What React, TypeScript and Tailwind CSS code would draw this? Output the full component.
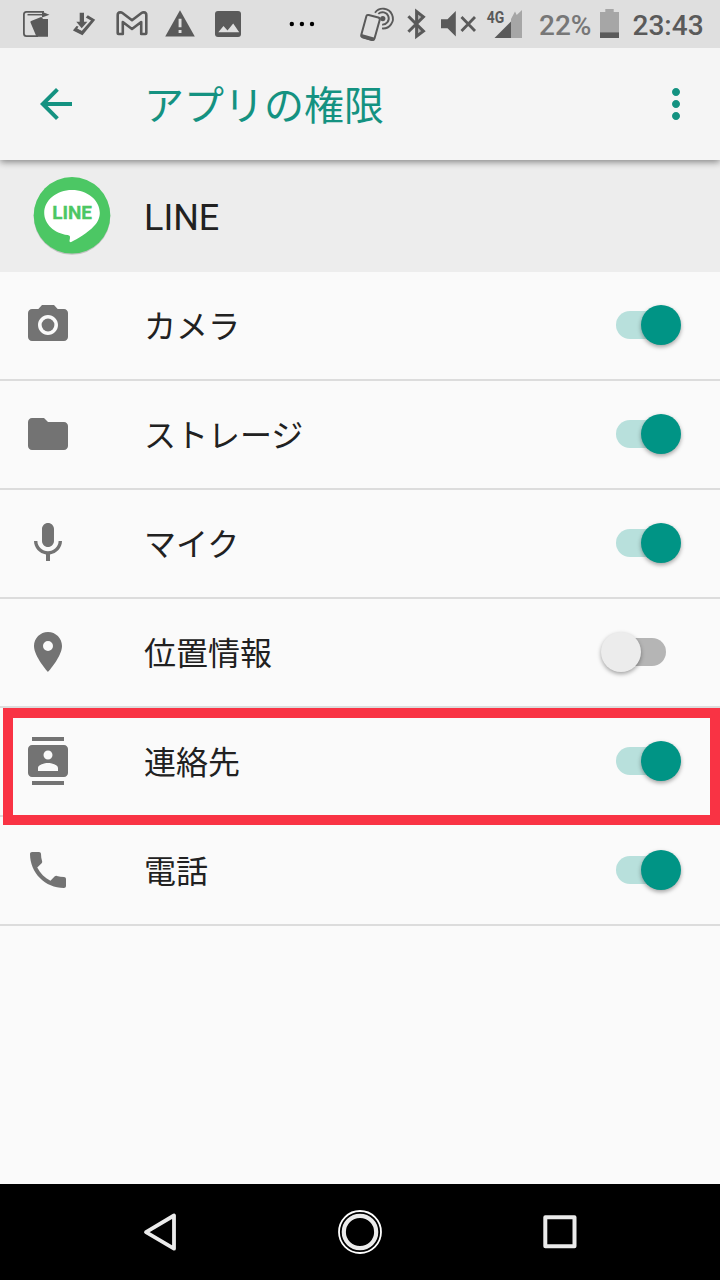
import { useState } from 'react'
import type { IconType } from 'react-icons'
import {
  MdArrowBack,
  MdContacts,
  MdFolder,
  MdMic,
  MdMoreVert,
  MdPhone,
  MdPhotoCamera,
  MdPlace,
} from 'react-icons/md'
import clsx from 'clsx'

interface Permission {
  label: string
  icon: IconType
  granted: boolean
  highlighted?: boolean
}

const permissions: Permission[] = [
  { label: 'カメラ', icon: MdPhotoCamera, granted: true },
  { label: 'ストレージ', icon: MdFolder, granted: true },
  { label: 'マイク', icon: MdMic, granted: true },
  { label: '位置情報', icon: MdPlace, granted: false },
  { label: '連絡先', icon: MdContacts, granted: true, highlighted: true },
  { label: '電話', icon: MdPhone, granted: true },
]

function StatusBar() {
  return (
    <div className="relative z-20 flex h-12 shrink-0 items-center bg-[#dfdfdf] pl-3 text-[#5a5a5a]">
      {/* notifications */}
      <svg className="h-12 w-12 shrink-0" viewBox="12 0 48 48" fill="none" stroke="currentColor" strokeWidth="1.8">
        <path d="M44 11.9H26.5q-2.6 0-2.6 2.6v19q0 2.6 2.6 2.6H38" />
        <path d="M27.5 14.7H43" strokeWidth="1.5" />
        <path d="M42 11.8l7.5 2.9-7.5 2.9zM30.5 22.5q-.4-1 .6-1.4l9.4-3.9q1-.4 1.5.3l1 1.4h5V36.8H36.5z" fill="currentColor" stroke="none" />
      </svg>
      <svg className="h-12 w-12 shrink-0" viewBox="60 0 48 48">
        <path d="M85.8 17.500l2-2.200 7.400 4.400L82.500 35.200 73 30.500l3.500-4.500 2 .5-1.400 2.500 4.600 2L91 20.500l-3.600-2z" fill="currentColor" />
        <path d="M73.500 30l2.200-2.300 7 3.800-.8 2.800z" fill="currentColor" />
        <path d="M79.700 12.800h4.300v9h3.400l-5.700 6.400-5.400-6.400h3.400z" fill="currentColor" />
      </svg>
      <svg className="h-12 w-12 shrink-0" viewBox="108 0 48 48" fill="none" stroke="currentColor" strokeWidth="2.6" strokeLinejoin="round">
        <path d="M118.500 34h4.300V22l9.200 7 9.200-7v12h4.300q.8 0 .8-.8V15q0-2.500-2.500-2.700-1.400 0-2.600.9l-9.200 7-9.200-7q-1.200-.9-2.600-.9-2.500.2-2.500 2.700v18.200q0 .8.8.8z" />
      </svg>
      <svg className="h-12 w-12 shrink-0" viewBox="156 0 48 48">
        <path d="M180 10.300L194.800 36.600H165.200z" fill="currentColor" />
        <path d="M178.600 18.800h2.900v8.500h-2.900zM178.600 30h2.900v3h-2.900z" fill="#dfdfdf" />
      </svg>
      <svg className="h-12 w-12 shrink-0" viewBox="204 0 48 48">
        <rect x="215" y="11" width="26" height="26" rx="3" fill="currentColor" />
        <path d="M218.300 32.300l5.200-6.300 4 4.600 5.700-7 6 8.700z" fill="#dfdfdf" />
      </svg>
      <svg className="ml-9 h-12 w-7 shrink-0" viewBox="288 0 28 48" fill="#000">
        <circle cx="291.8" cy="24" r="2.2" />
        <circle cx="301.9" cy="24" r="2.2" />
        <circle cx="312" cy="24" r="2.2" />
      </svg>

      {/* system indicators */}
      <svg className="ml-[42px] h-12 w-[38px] shrink-0" viewBox="358 0 38 48" fill="none" stroke="currentColor">
        <path d="M368.700 15l9.600 2.500q1.900.6 1.400 2.500l-5.200 18.500q-.6 2-2.500 1.500l-9.500-2.800q-1.700-.5-1.200-2.400l5-18.300q.5-2 2.400-1.500z" strokeWidth="2" />
        <path d="M361.500 34l13.300 3.700-.8 2.800-1.700.5-10-2.900-1.500-1.500z" fill="currentColor" stroke="none" />
        <circle cx="382.800" cy="18.600" r="2.600" fill="currentColor" stroke="none" />
        <path d="M378.300 13.900a6.200 6.200 0 1 1 3.800 10.700" strokeWidth="1.9" />
        <path d="M375 12.700a9.900 9.900 0 1 1 7 15.700" strokeWidth="1.900" />
      </svg>
      <svg className="ml-1 h-12 w-[34px] shrink-0" viewBox="400 0 34 48" fill="none" stroke="currentColor" strokeWidth="3">
        <path d="M408.400 16.200l15 15-6.800 5V11.600l6.800 5.200-15 15" />
        <path d="M416.500 11l7.500 5.500-7.500 6.500zM416.500 25l7.500 6-7.500 6z" fill="currentColor" fillOpacity=".3" stroke="none" />
      </svg>
      <svg className="ml-[7px] h-12 w-[37px] shrink-0" viewBox="441 0 37 48">
        <path d="M441 19.300h6.500l8.300-8.300v25.500l-8.300-8.300H441z" fill="currentColor" />
        <path d="M461.500 17l13.500 14m0-14l-13.500 14" stroke="currentColor" strokeWidth="2.8" />
      </svg>
      <svg className="ml-2 h-12 w-[38px] shrink-0" viewBox="486 0 38 48">
        <path d="M511 38V19l4-7.500 1.700 3.500L522 10v28z" fill="#a6a6a6" />
        <path d="M494.500 38L511 21.500V38z" fill="currentColor" />
        <text x="486.8" y="22.8" fontSize="17" textLength="17.5" lengthAdjust="spacingAndGlyphs" fill="currentColor" className="font-['Roboto',sans-serif] font-bold">
          4G
        </text>
      </svg>
      <span className="ml-[15px] w-[52.5px] shrink-0 pt-[3px] text-[28px] leading-none font-medium text-[#777]">22%</span>
      <svg className="ml-2 h-12 w-5 shrink-0" viewBox="600 0 20 48">
        <path d="M600 12h5.300V9h8.400v3h5.300v20.500h-19z" fill="#a6a6a6" />
        <path d="M600 32.300h19V38h-19z" fill="currentColor" />
      </svg>
      <span className="ml-[13px] shrink-0 pt-[3px] text-[28px] leading-none font-medium">23:43</span>
    </div>
  )
}

function LineLogo() {
  return (
    <svg className="size-20" viewBox="32 176 80 80">
      <circle cx="72" cy="216.5" r="38.3" fill="#000" opacity=".18" />
      <circle cx="72" cy="215.3" r="38.3" fill="#4cc764" />
      <path d="M72 190c-15.400 0-27.800 10.200-27.800 22.800 0 11.300 10 20.600 23.400 22.300 2.400.4 2.600 1.400 2.300 3.300l-.4 2.400c-.1 1 .6 1.600 1.700 1.200 1.400-.5 13.500-7.200 20.500-13.500 5.400-4.900 8.100-9.800 8.100-15.700C99.800 200.200 87.400 190 72 190z" fill="#fff" />
      <text x="52.3" y="218.9" fontSize="18" textLength="39.7" lengthAdjust="spacingAndGlyphs" fill="#4cc764" stroke="#4cc764" strokeWidth=".3" className="font-['Roboto',sans-serif] font-bold">
        LINE
      </text>
    </svg>
  )
}

function Toggle({ on, onChange }: { on: boolean; onChange: () => void }) {
  return (
    <button
      role="switch"
      aria-checked={on}
      onClick={onChange}
      className={clsx('mr-[54px] flex h-7 w-[50px] items-center rounded-full', on ? 'justify-end bg-[#b8e0dc]' : 'justify-start bg-[#b5b5b5]')}
    >
      <span
        className={clsx(
          'size-10 shrink-0 rounded-full shadow-[0_2px_4px_rgba(0,0,0,0.35)]',
          on ? '-mr-[15px] bg-[#009485]' : '-ml-[15px] bg-[#ececec]'
        )}
      />
    </button>
  )
}

export default function App() {
  const [items, setItems] = useState(permissions)

  const toggle = (index: number) =>
    setItems(items.map((item, i) => (i === index ? { ...item, granted: !item.granted } : item)))

  return (
    <div lang="ja" className="flex h-[1280px] w-[720px] flex-col overflow-hidden bg-[#fafafa] font-['Roboto','Noto_Sans_CJK_JP',sans-serif] text-[#212121]">
      <StatusBar />

      <header className="z-10 flex h-28 shrink-0 items-center bg-[#f5f5f5] px-5 pl-8 text-[#149281] shadow-[0_2px_7px_rgba(0,0,0,0.45)]">
        <MdArrowBack className="size-12" />
        <h1 className="ml-16 flex-1 pt-1.5 text-[40px] leading-none">アプリの権限</h1>
        <MdMoreVert className="size-12" />
      </header>

      <div className="flex h-28 shrink-0 items-center bg-[#ededed] pl-8">
        <LineLogo />
        <span className="ml-8 pt-1 text-4xl leading-none">LINE</span>
      </div>

      <ul>
        {items.map(({ label, icon: Icon, granted, highlighted }, i) => (
          <li key={label} className="relative flex h-[109px] items-center border-b-2 border-[#dcdcdc] pb-px pl-6">
            <Icon className="size-12 text-[#737373]" />
            <span className="ml-[72px] flex-1 pt-1 text-[32px] leading-none">{label}</span>
            <Toggle on={granted} onChange={() => toggle(i)} />
            {highlighted && (
              <div className="pointer-events-none absolute top-0 right-0 left-[3px] z-10 h-[117px] border-[10px] border-[#f93344]" />
            )}
          </li>
        ))}
      </ul>

      <nav className="mt-auto flex h-24 shrink-0 items-center justify-center gap-[152px] bg-black">
        <svg className="size-12" viewBox="0 0 48 48" fill="none" stroke="#ebebeb" strokeWidth="3.8" strokeLinejoin="round">
          <path d="M10 24.200L38 7.500V40.700z" />
        </svg>
        <svg className="size-12" viewBox="0 0 48 48" fill="none">
          <circle cx="24" cy="24" r="21" stroke="#fff" strokeWidth="1.8" />
          <circle cx="24" cy="24" r="16.2" stroke="#ebebeb" strokeWidth="4.2" />
        </svg>
        <svg className="size-12" viewBox="0 0 48 48" fill="none" stroke="#ebebeb" strokeWidth="4" strokeLinejoin="round">
          <path d="M9.300 9.200h29.200v29H9.300z" />
        </svg>
      </nav>
    </div>
  )
}
